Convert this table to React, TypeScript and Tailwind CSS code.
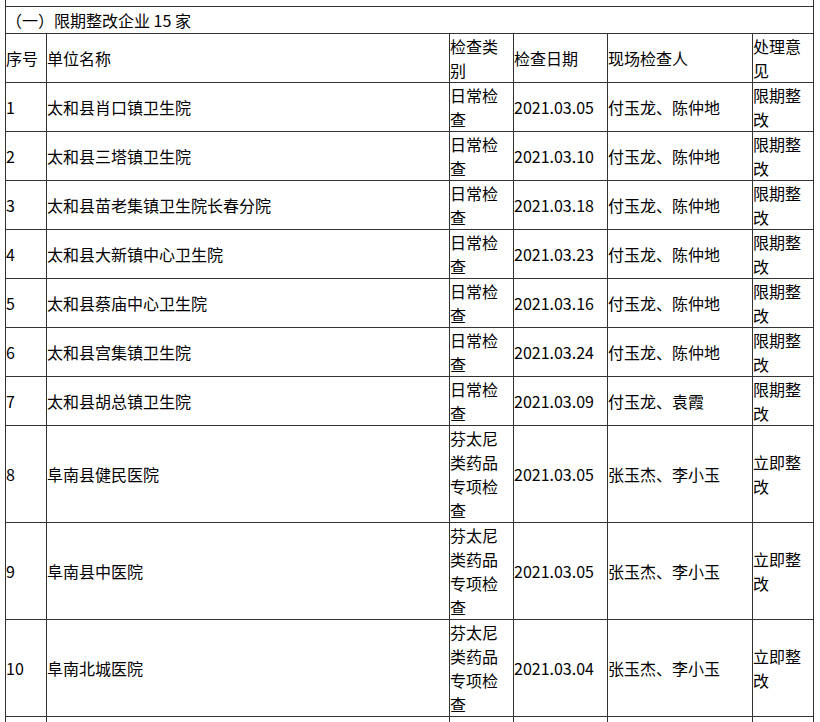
const rows = [
  { no: "1", name: "太和县肖口镇卫生院", type: "日常检查", date: "2021.03.05", who: "付玉龙、陈仲地", result: "限期整改" },
  { no: "2", name: "太和县三塔镇卫生院", type: "日常检查", date: "2021.03.10", who: "付玉龙、陈仲地", result: "限期整改" },
  { no: "3", name: "太和县苗老集镇卫生院长春分院", type: "日常检查", date: "2021.03.18", who: "付玉龙、陈仲地", result: "限期整改" },
  { no: "4", name: "太和县大新镇中心卫生院", type: "日常检查", date: "2021.03.23", who: "付玉龙、陈仲地", result: "限期整改" },
  { no: "5", name: "太和县蔡庙中心卫生院", type: "日常检查", date: "2021.03.16", who: "付玉龙、陈仲地", result: "限期整改" },
  { no: "6", name: "太和县宫集镇卫生院", type: "日常检查", date: "2021.03.24", who: "付玉龙、陈仲地", result: "限期整改" },
  { no: "7", name: "太和县胡总镇卫生院", type: "日常检查", date: "2021.03.09", who: "付玉龙、袁霞", result: "限期整改" },
  { no: "8", name: "阜南县健民医院", type: "芬太尼类药品专项检查", date: "2021.03.05", who: "张玉杰、李小玉", result: "立即整改" },
  { no: "9", name: "阜南县中医院", type: "芬太尼类药品专项检查", date: "2021.03.05", who: "张玉杰、李小玉", result: "立即整改" },
  { no: "10", name: "阜南北城医院", type: "芬太尼类药品专项检查", date: "2021.03.04", who: "张玉杰、李小玉", result: "立即整改" },
];

const cell = "p-0 border-r border-b border-[#333]";
const first = "p-0 border-l border-r border-b border-[#333]";

export default function App() {
  return (
    <div className="h-[722px] overflow-hidden bg-white">
      <table
        className="ml-[5px] w-[809px] table-fixed border-separate border-spacing-0 text-[16px] leading-[24px] text-black"
        style={{ fontFamily: '"Noto Sans CJK SC", "Noto Sans", sans-serif' }}
      >
        <colgroup>
          <col className="w-[42px]" />
          <col className="w-[403px]" />
          <col className="w-[64px]" />
          <col className="w-[94px]" />
          <col className="w-[145px]" />
          <col className="w-[61px]" />
        </colgroup>
        <tbody>
          <tr>
            <td colSpan={6} className={`${first} h-[7px]`}></td>
          </tr>
          <tr>
            <td colSpan={6} className={`${first} h-[27px]`}>（一）限期整改企业 15 家</td>
          </tr>
          <tr>
            <td className={first}>序号</td>
            <td className={cell}>单位名称</td>
            <td className={cell}>检查类别</td>
            <td className={cell}>检查日期</td>
            <td className={cell}>现场检查人</td>
            <td className={cell}>处理意见</td>
          </tr>
          {rows.map(r => (
            <tr key={r.no}>
              <td className={first}>{r.no}</td>
              <td className={cell}>{r.name}</td>
              <td className={cell}>{r.type}</td>
              <td className={cell}>{r.date}</td>
              <td className={cell}>{r.who}</td>
              <td className={cell}>{r.result}</td>
            </tr>
          ))}
          <tr>
            <td className={`${first} h-[49px]`}></td>
            <td className={cell}></td>
            <td className={cell}></td>
            <td className={cell}></td>
            <td className={cell}></td>
            <td className={cell}></td>
          </tr>
        </tbody>
      </table>
    </div>
  );
}
